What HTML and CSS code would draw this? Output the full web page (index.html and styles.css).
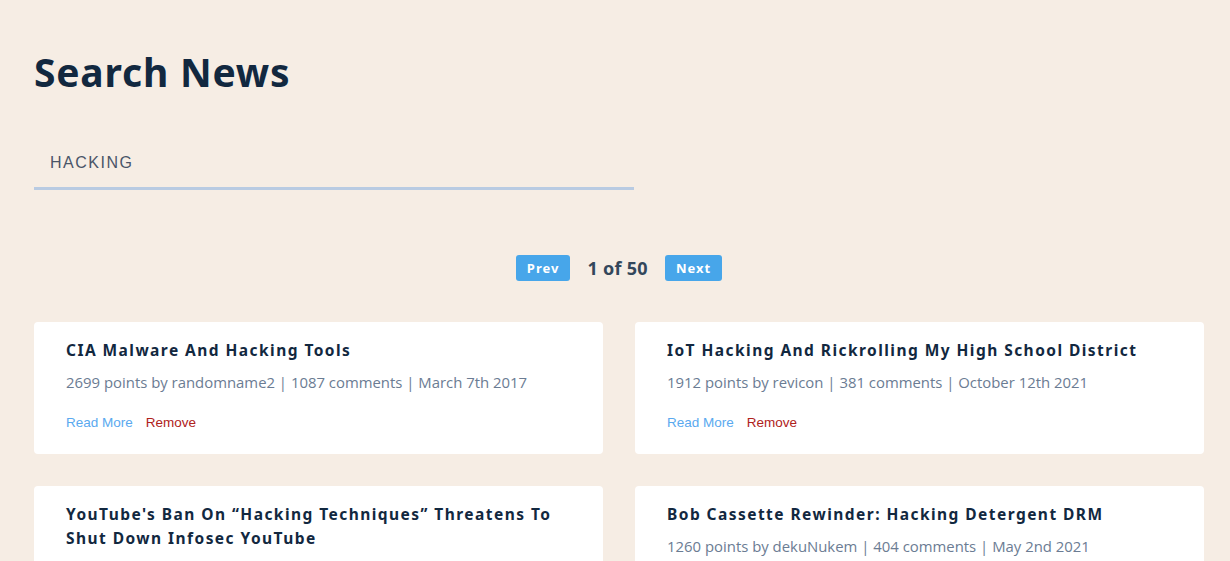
FILE: index.html
```html
<!DOCTYPE html>
<html lang="en">
<head>
<meta charset="utf-8">
<title>Search News</title>
<link rel="stylesheet" href="styles.css">
</head>
<body>
<main class="page">
  <h1 class="title">Search News</h1>
  <form class="search">
    <input class="search-input" type="text" value="HACKING">
  </form>
  <div class="pager">
    <button class="pager-btn">Prev</button>
    <span class="pager-info">1 of 50</span>
    <button class="pager-btn">Next</button>
  </div>
  <section class="grid">
    <article class="card">
      <h3 class="card-title">CIA Malware And Hacking Tools</h3>
      <p class="card-meta">2699 points by randomname2 | 1087 comments | March 7th 2017</p>
      <div class="card-links"><a class="read" href="#">Read More</a><a class="remove" href="#">Remove</a></div>
    </article>
    <article class="card">
      <h3 class="card-title">IoT Hacking And Rickrolling My High School District</h3>
      <p class="card-meta">1912 points by revicon | 381 comments | October 12th 2021</p>
      <div class="card-links"><a class="read" href="#">Read More</a><a class="remove" href="#">Remove</a></div>
    </article>
    <article class="card">
      <h3 class="card-title">YouTube's Ban On “Hacking Techniques” Threatens To Shut Down Infosec YouTube</h3>
      <p class="card-meta">1108 points by rwcesc | 590 comments | July 3rd 2019</p>
      <div class="card-links"><a class="read" href="#">Read More</a><a class="remove" href="#">Remove</a></div>
    </article>
    <article class="card">
      <h3 class="card-title">Bob Cassette Rewinder: Hacking Detergent DRM</h3>
      <p class="card-meta">1260 points by dekuNukem | 404 comments | May 2nd 2021</p>
      <div class="card-links"><a class="read" href="#">Read More</a><a class="remove" href="#">Remove</a></div>
    </article>
  </section>
</main>
</body>
</html>
```
FILE: styles.css
```css
* { box-sizing: border-box; }
html, body { margin: 0; padding: 0; }
body {
  background: #f6ede4;
  font-family: "Open Sans", "Noto Sans", sans-serif;
  color: #12283f;
}
.page {
  padding: 44px 26px 40px 34px;
}
.title {
  margin: 0;
  font-family: "Noto Sans", "Open Sans", sans-serif;
  font-size: 39px;
  font-weight: 700;
  letter-spacing: 0.8px;
  line-height: 56px;
  color: #12283f;
}
.search {
  margin-top: 38px;
  width: 600px;
}
.search-input {
  display: block;
  width: 100%;
  height: 52px;
  border: 0;
  border-bottom: 3px solid #b9cbe2;
  background: transparent;
  padding: 0 16px;
  font-family: "Liberation Sans", Arial, sans-serif;
  font-size: 16px;
  letter-spacing: 1.5px;
  color: #4a5568;
  outline: none;
}
.pager {
  display: flex;
  justify-content: center;
  align-items: center;
  gap: 17px;
  margin-top: 65px;
}
.pager-btn {
  height: 26px;
  padding: 0 11px;
  border: 0;
  border-radius: 3px;
  background: #47a6ea;
  color: #fff;
  font-family: "Noto Sans", sans-serif;
  font-weight: 700;
  font-size: 13px;
  letter-spacing: 1px;
}
.pager-info {
  font-family: "Noto Sans", sans-serif;
  font-weight: 700;
  font-size: 18px;
  letter-spacing: 0.3px;
  color: #33475b;
}
.grid {
  margin-top: 41px;
  display: grid;
  grid-template-columns: 1fr 1fr;
  gap: 32px;
}
.card {
  background: #fff;
  border-radius: 4px;
  padding: 16px 32px 20px;
  min-height: 132px;
}
.card-title {
  margin: 0;
  font-family: "Noto Sans", sans-serif;
  font-size: 15.5px;
  font-weight: 700;
  letter-spacing: 1.45px;
  line-height: 24px;
  color: #12283f;
}
.card-meta {
  margin: 8px 0 0;
  font-size: 14.9px;
  font-weight: 400;
  line-height: 24px;
  color: #6b7c93;
}
.card-links {
  margin-top: 21px;
  display: flex;
  gap: 13px;
  font-family: "Liberation Sans", Arial, sans-serif;
  font-size: 13.5px;
}
.card-links a { text-decoration: none; }
.read { color: #5aa9ef; }
.remove { color: #b0221b; }
```
